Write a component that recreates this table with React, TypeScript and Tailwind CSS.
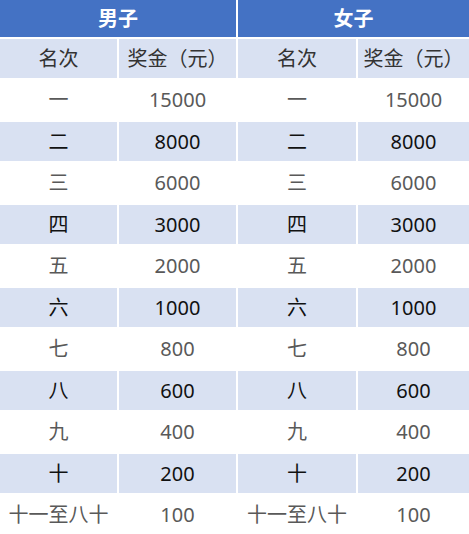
import React from 'react'

const rows = [
  ['一', '15000'],
  ['二', '8000'],
  ['三', '6000'],
  ['四', '3000'],
  ['五', '2000'],
  ['六', '1000'],
  ['七', '800'],
  ['八', '600'],
  ['九', '400'],
  ['十', '200'],
  ['十一至八十', '100'],
]

const App = () => {
  return (
    <div
      className="w-[469px] h-[534px] bg-white overflow-hidden"
      style={{ fontFamily: '"Noto Sans", "Noto Sans CJK SC", sans-serif' }}
    >
      <div className="grid grid-cols-[117px_117px_118px_111px] grid-rows-[37px_39px_40px_39px_40px_39px_40px_39px_40px_39px_40px_39px_39px] gap-[2px] text-[20px] leading-none">
        <div className="col-span-2 bg-[#4472c4] text-white font-bold flex items-center justify-center">男子</div>
        <div className="col-span-2 bg-[#4472c4] text-white font-bold flex items-center justify-center">女子</div>

        {['名次', '奖金（元）', '名次', '奖金（元）'].map((t, i) => (
          <div key={'h' + i} className="bg-[#d9e1f2] text-[#333333] flex items-center justify-center">
            {t}
          </div>
        ))}

        {rows.map((r, idx) => {
          const shaded = idx % 2 === 1
          const cls = shaded
            ? 'bg-[#d9e1f2] text-[#111111] flex items-center justify-center'
            : 'bg-white text-[#595959] flex items-center justify-center'
          return (
            <React.Fragment key={idx}>
              <div className={cls}>{r[0]}</div>
              <div className={cls}>{r[1]}</div>
              <div className={cls}>{r[0]}</div>
              <div className={cls}>{r[1]}</div>
            </React.Fragment>
          )
        })}
      </div>
    </div>
  )
}

export default App
